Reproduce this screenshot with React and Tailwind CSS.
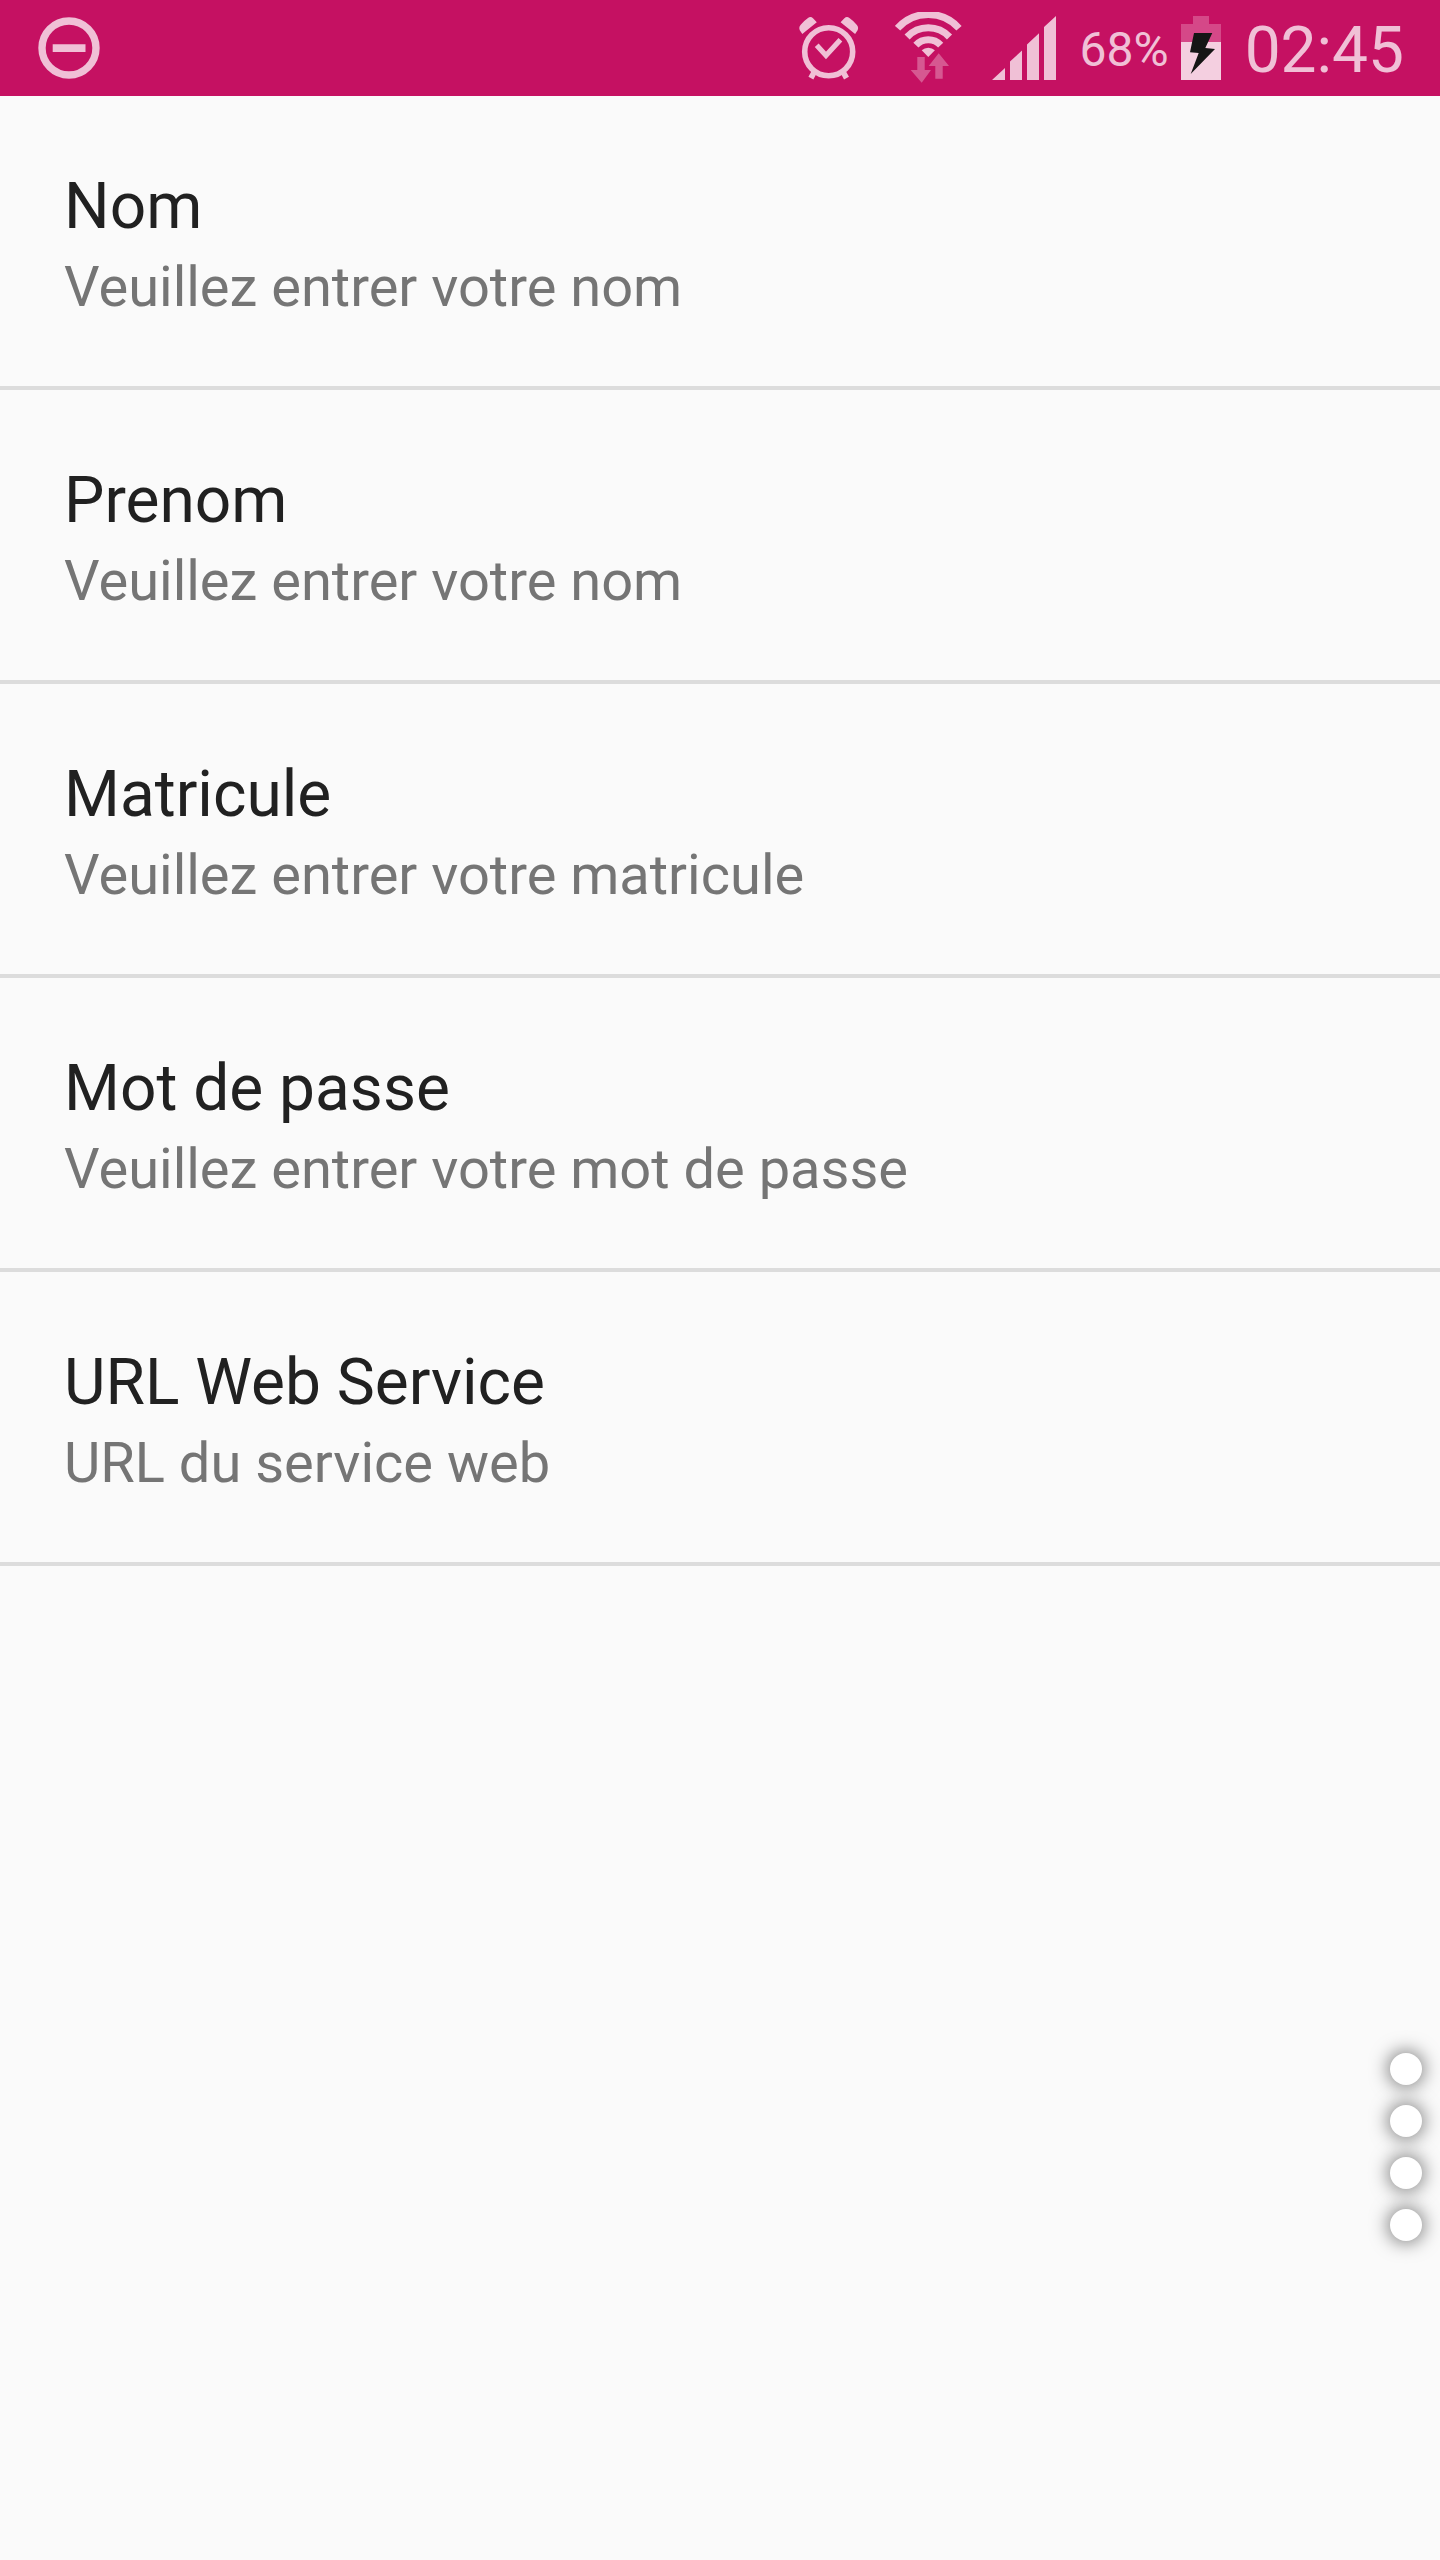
import React from "react";

const settings = [
  { title: "Nom", summary: "Veuillez entrer votre nom" },
  { title: "Prenom", summary: "Veuillez entrer votre nom" },
  { title: "Matricule", summary: "Veuillez entrer votre matricule" },
  { title: "Mot de passe", summary: "Veuillez entrer votre mot de passe" },
  { title: "URL Web Service", summary: "URL du service web" },
];

function DoNotDisturbIcon() {
  return (
    <svg width="62" height="62" viewBox="0 0 62 62" fill="none" aria-hidden="true">
      <circle cx="31" cy="31" r="27" stroke="currentColor" strokeWidth="7.4" />
      <path d="M14.7 27.3h32.8v7.7H14.7z" fill="currentColor" />
    </svg>
  );
}

function AlarmIcon() {
  return (
    <svg width="60" height="64" viewBox="0 0 60 64" fill="none" aria-hidden="true">
      <path
        fill="currentColor"
        d="M17.8 6.2 14 2.2Q11.7 .2 9 1.9Q4.5 5 1.5 8.9Q-.5 11.5 .8 14.2L3.3 18ZM41.6 6.2 45.4 2.2Q47.7 .2 50.4 1.9Q54.9 5 57.9 8.9Q59.9 11.5 58.6 14.2L56.1 18Z"
      />
      <circle cx="29.7" cy="35.7" r="24" stroke="currentColor" strokeWidth="5.6" />
      <path d="m17.7 29.2 9.3 10.2 14.4-15.6" stroke="currentColor" strokeWidth="5.2" />
      <path d="m15.5 55.5-3.6 6.7m32-6.7 3.6 6.7" stroke="currentColor" strokeWidth="5.6" />
    </svg>
  );
}

function WifiIcon() {
  return (
    <svg width="67" height="72" viewBox="0 0 67 72" fill="none" aria-hidden="true">
      <g stroke="currentColor" strokeWidth="7">
        <path d="M2.6 16.2A41 41 0 0 1 64 16.2" />
        <path d="M12.1 25A29 29 0 0 1 54.5 25" />
        <path d="M20.9 33.1A17 17 0 0 1 45.7 33.1" />
      </g>
      <path d="M33.3 45 26.7 38.3A9.6 9.6 0 0 1 39.9 38.3Z" fill="currentColor" />
      <path
        fill="#fff"
        fillOpacity=".3"
        d="M22.3 45h7.4v13H36l-9.3 12.7L15.7 58h6.6zM43.7 41.3 54 54h-6.3v12.7h-7.4V54h-6.6z"
      />
    </svg>
  );
}

function SignalIcon() {
  return (
    <svg width="64" height="64" viewBox="0 0 64 64" fill="currentColor" aria-hidden="true">
      <path d="M0 64 13 52v12zM18 45.5 30 34.5V64H18zM35 28.5 47 17.3V64H35zM52 11 64 0v64H52z" />
    </svg>
  );
}

function BatteryIcon() {
  return (
    <svg width="40" height="64" viewBox="0 0 40 64" aria-hidden="true">
      <path d="M12 0h16v8h12v18H0V8h12z" fill="#d54888" />
      <path d="M0 26h40v38H0z" fill="#f4cfe0" />
      <path d="M13 17h18.3l-7 15 9.7 1L9.7 58l8-21-8.7-.7z" fill="#151515" />
    </svg>
  );
}

function StatusBar() {
  return (
    <header className="flex h-24 items-center justify-between bg-[#c51162] pr-9 pl-[38px] text-[#f0c0d6]">
      <DoNotDisturbIcon />
      <div className="flex items-center">
        <AlarmIcon />
        <div className="ml-9">
          <WifiIcon />
        </div>
        <div className="ml-[30px]">
          <SignalIcon />
        </div>
        <span className="ml-6 pt-1 text-[48px] leading-[60px]">68%</span>
        <div className="ml-3">
          <BatteryIcon />
        </div>
        <time className="ml-6 pt-1.5 text-[64px] leading-[76px]">02:45</time>
      </div>
    </header>
  );
}

function SettingRow({ title, summary }) {
  return (
    <li className="border-b-4 border-[#dcdcdc]">
      <button type="button" className="flex w-full flex-col gap-[9px] px-16 pt-[73px] pb-[66px] text-left">
        <span className="text-[64px] leading-[76px] text-[#212121]">{title}</span>
        <span className="text-[56px] leading-[66px] text-[#757575]">{summary}</span>
      </button>
    </li>
  );
}

export default function App() {
  return (
    <div className="relative min-h-screen bg-[#fafafa] font-['Roboto',sans-serif]">
      <StatusBar />
      <main>
        <ul>
          {settings.map((item) => (
            <SettingRow key={item.title} {...item} />
          ))}
        </ul>
      </main>
      <button
        type="button"
        aria-label="Menu"
        className="absolute right-[18px] bottom-[319px] flex flex-col gap-5"
      >
        {[0, 1, 2, 3].map((dot) => (
          <span key={dot} className="size-8 rounded-full bg-white shadow-[0_0_18px_2px_rgba(0,0,0,0.5)]" />
        ))}
      </button>
    </div>
  );
}
